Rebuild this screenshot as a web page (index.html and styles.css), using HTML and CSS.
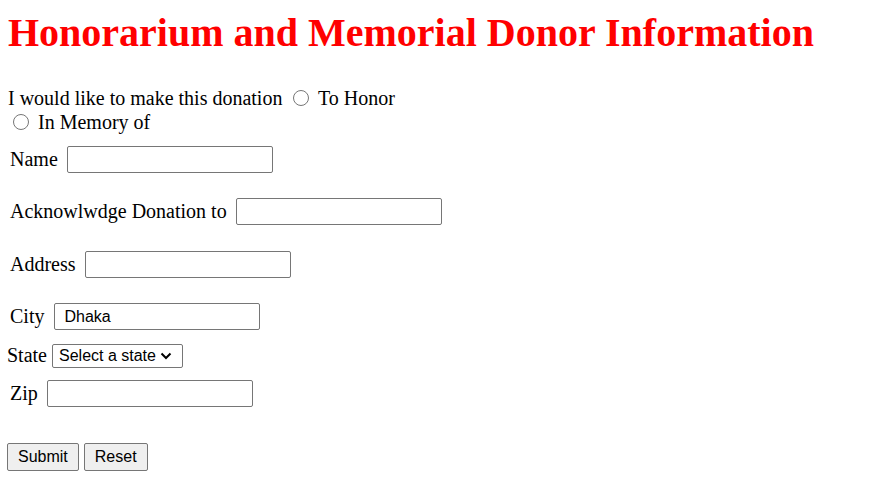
FILE: index.html
```html
<!DOCTYPE html>
<html>
<head>
<meta charset="utf-8">
<link rel="stylesheet" href="styles.css">
</head>
<body>
<h1 class="title">Honorarium and Memorial Donor Information</h1>
<form class="form">
  <div class="choice">
    <div class="line">I would like to make this donation <label class="opt"><input class="radio" type="radio" name="kind"> To Honor</label></div>
    <div class="line line-sub"><label class="opt"><input class="radio" type="radio" name="kind"> In Memory of</label></div>
  </div>
  <div class="row row-name"><label class="lbl">Name</label><input class="field" type="text"></div>
  <div class="row row-gap"><label class="lbl">Acknowlwdge Donation to</label><input class="field" type="text"></div>
  <div class="row row-gap"><label class="lbl">Address</label><input class="field" type="text"></div>
  <div class="row row-gap row-city"><label class="lbl">City</label><input class="field" type="text" value="Dhaka"></div>
  <div class="row-state"><label class="lbl">State</label><span class="select">Select a state<svg class="chev" width="12" height="8" viewBox="0 0 12 8"><path d="M1.5 1.5 L6 6 L10.5 1.5" fill="none" stroke="#000" stroke-width="2"/></svg></span></div>
  <div class="row row-zip"><label class="lbl">Zip</label><input class="field" type="text"></div>
  <div class="buttons"><button class="btn" type="button">Submit</button><button class="btn" type="button">Reset</button></div>
</form>
</body>
</html>
```
FILE: styles.css
```css
html, body {
  margin: 0;
  padding: 0;
  background: #fff;
}
body {
  font-family: "Liberation Serif", "Times New Roman", serif;
  font-size: 20px;
  color: #000;
  padding: 0 8px;
}
.title {
  margin: 10px 0 0 0;
  font-size: 40px;
  line-height: 46px;
  color: #ff0000;
  font-weight: bold;
}
.form {
  margin: 0;
  padding-top: 30px;
}
.line {
  height: 24px;
  line-height: 24px;
  white-space: nowrap;
}
.line-sub {
  padding-left: 5px;
}
.opt {
  display: inline;
}
.radio {
  width: 16px;
  height: 16px;
  margin: 0 4px 0 6px;
  vertical-align: -1px;
  accent-color: #767676;
}
.line-sub .radio {
  margin-left: 0;
}
.row {
  display: flex;
  align-items: center;
  height: 30px;
  gap: 9px;
  padding-left: 2px;
}
.row-city {
  gap: 10px;
}
.row-name {
  margin-top: 10px;
}
.row-gap {
  margin-top: 22.5px;
}
.row-zip {
  margin-top: 11px;
}
.lbl {
  white-space: nowrap;
}
.field {
  box-sizing: border-box;
  width: 206px;
  height: 27px;
  border: 1px solid #767676;
  border-radius: 2px;
  padding: 0 9px;
  font-family: "Liberation Sans", Arial, sans-serif;
  font-size: 16px;
  color: #000;
  background: #fff;
  margin: 0;
}
.row-state {
  display: flex;
  align-items: center;
  height: 24px;
  margin-top: 12px;
  gap: 5px;
  margin-left: -1px;
}
.select {
  box-sizing: border-box;
  height: 24px;
  width: 131px;
  border: 1px solid #767676;
  border-radius: 2px;
  display: flex;
  align-items: center;
  padding-left: 6px;
  gap: 4px;
  font-family: "Liberation Sans", Arial, sans-serif;
  font-size: 16px;
  white-space: nowrap;
}
.chev {
  flex: none;
}
.buttons {
  display: flex;
  gap: 5px;
  margin-top: 34px;
  margin-left: -1px;
}
.btn {
  box-sizing: border-box;
  height: 28px;
  padding: 0 10px;
  border: 1px solid #767676;
  border-radius: 2px;
  background: #efefef;
  font-family: "Liberation Sans", Arial, sans-serif;
  font-size: 16px;
  color: #000;
  margin: 0;
}
```
